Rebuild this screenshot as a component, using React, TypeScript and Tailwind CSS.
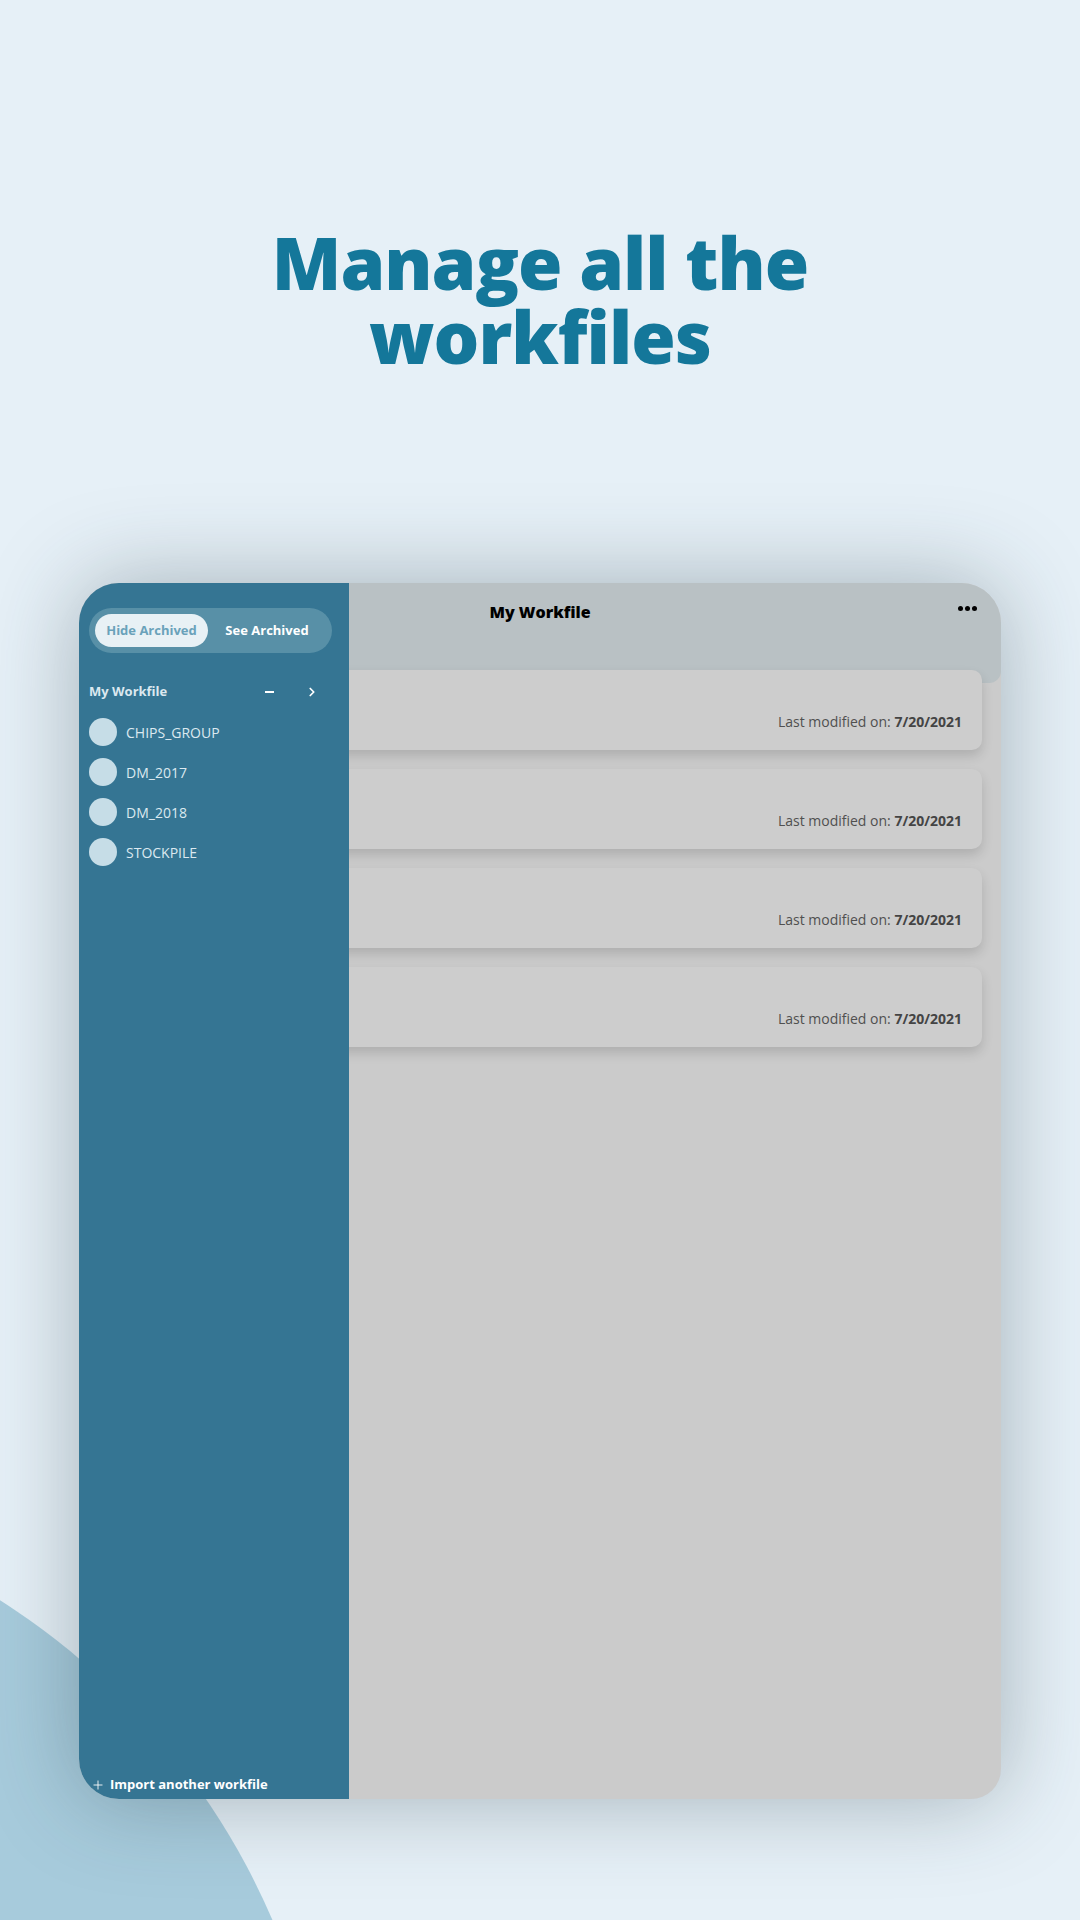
import React from 'react';
import { ChevronRight, Plus } from 'lucide-react';

const workfiles = ['CHIPS_GROUP', 'DM_2017', 'DM_2018', 'STOCKPILE'];

function WorkfileCard() {
  return (
    <div className="h-[80px] rounded-[10px] bg-[#cdcdcd] pt-[42px] pr-[20px] text-right text-[14px] leading-[20px] text-[#505050] shadow-[0_6px_12px_rgba(0,0,0,0.14)]">
      Last modified on: <span className="font-bold text-[#444]">7/20/2021</span>
    </div>
  );
}

export default function App() {
  return (
    <div className="relative h-[1920px] w-full overflow-hidden bg-[#e6f0f7] font-['Open_Sans',sans-serif]">
      {/* background blob */}
      <div className="absolute left-[-1090px] top-[1490px] h-[1420px] w-[1420px] rounded-full bg-[#a7cbdc]" />

      <div className="relative flex flex-col items-center">
        <h1 className="mt-[225px] text-center text-[72px] font-extrabold leading-[74px] tracking-[-1px] text-[#14779a]">
          Manage all the
          <br />
          workfiles
        </h1>

        {/* Device */}
        <div className="relative mt-[210px] h-[1216px] w-[922px] overflow-hidden rounded-[40px] rounded-br-[30px] bg-[#cbcbcb] shadow-[0_0_90px_rgba(40,60,70,0.35)]">
          {/* App header */}
          <div className="grid h-[100px] grid-cols-[1fr_auto_1fr] rounded-b-[12px] bg-[#b9c1c4] pt-[17px]">
            <div />
            <h2 className="text-[16px] font-extrabold leading-[24px] text-black">My Workfile</h2>
            <div className="flex justify-end pr-[24px] pt-[6px]">
              <div className="flex gap-[2px]">
                <span className="h-[5px] w-[5px] rounded-full bg-black" />
                <span className="h-[5px] w-[5px] rounded-full bg-black" />
                <span className="h-[5px] w-[5px] rounded-full bg-black" />
              </div>
            </div>
          </div>

          {/* Workfile cards */}
          <div className="-mt-[13px] flex flex-col gap-[19px] px-[19px]">
            <WorkfileCard />
            <WorkfileCard />
            <WorkfileCard />
            <WorkfileCard />
          </div>

          {/* Drawer */}
          <aside className="absolute inset-y-0 left-0 flex w-[270px] flex-col bg-[#357593] px-[10px]">
            <div className="mt-[25px] mr-[7px] flex h-[45px] items-center rounded-full bg-[#5890a7] px-[6px]">
              <div className="flex h-[33px] w-[113px] items-center justify-center rounded-full bg-[#e8f1f5] text-[13px] font-bold text-[#6aa2ba]">
                Hide Archived
              </div>
              <div className="flex-1 text-center text-[13px] font-bold text-white">See Archived</div>
            </div>

            <div className="mt-[29px] flex h-[20px] items-center text-[#dbe8ef]">
              <span className="text-[13px] font-bold">My Workfile</span>
              <span className="ml-auto mr-[31px] h-[2px] w-[9px] bg-white" />
              <ChevronRight className="mr-[20px] h-[14px] w-[14px] text-white" strokeWidth={3} />
            </div>

            <ul className="mt-[16px] flex flex-col gap-[12px]">
              {workfiles.map((name) => (
                <li key={name} className="flex h-[28px] items-center">
                  <span className="h-[28px] w-[28px] rounded-full bg-[#c6dde7]" />
                  <span className="ml-[9px] text-[14px] text-[#dce9f0]">{name}</span>
                </li>
              ))}
            </ul>

            <div className="mt-auto mb-[4px] flex h-[20px] items-center text-white">
              <Plus className="ml-[2px] h-[14px] w-[14px]" strokeWidth={1.5} />
              <span className="ml-[5px] text-[13px] font-bold">Import another workfile</span>
            </div>
          </aside>
        </div>
      </div>
    </div>
  );
}
